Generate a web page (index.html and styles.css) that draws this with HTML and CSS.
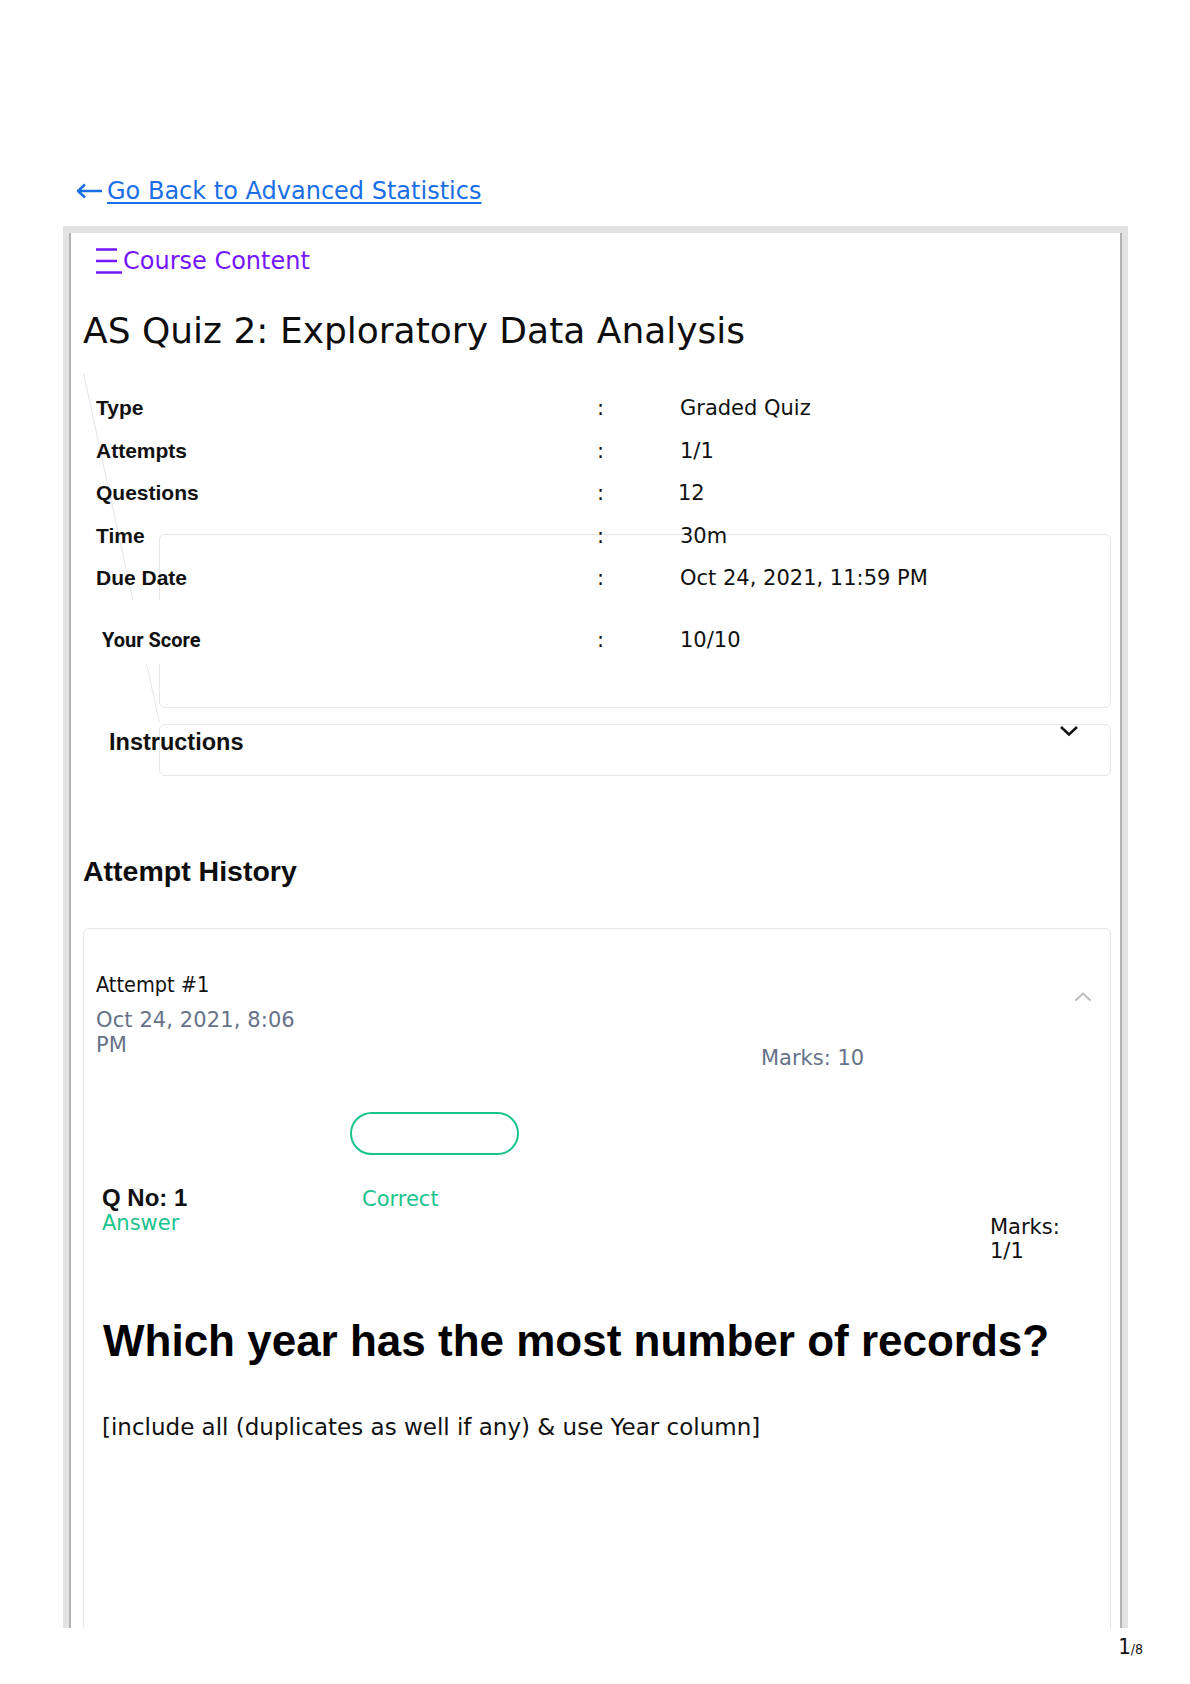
FILE: index.html
```html
<!DOCTYPE html>
<html lang="en">
<head>
  <meta charset="UTF-8" />
  <meta name="viewport" content="width=device-width, initial-scale=1" />
  <title>AS Quiz 2: Exploratory Data Analysis</title>
  <link rel="stylesheet" href="styles.css">
</head>
<body>

  <!-- Back link -->
  <a class="back-link" href="#">
    <svg width="28" height="16" viewBox="0 0 28 16"><path d="M3 8 H27 M10 1.5 L3 8 L10 14.5" fill="none" stroke="currentColor" stroke-width="2.5" stroke-linejoin="round"/></svg>
    <span>Go Back to Advanced Statistics</span>
  </a>

  <!-- Quiz frame -->
  <div class="frame">
    <a class="course-link" href="#">
      <svg width="27" height="30" viewBox="0 0 27 30"><path d="M0 3.5 H21 M0 15 H21 M0 26.5 H26" stroke="currentColor" stroke-width="2.5"/></svg>
      <span>Course Content</span>
    </a>

    <h1 class="quiz-title">AS Quiz 2: Exploratory Data Analysis</h1>

    <div class="summary">
      <div class="info">
        <div class="info-row"><span class="info-label">Type</span><span>:</span><span>Graded Quiz</span></div>
        <div class="info-row"><span class="info-label">Attempts</span><span>:</span><span>1/1</span></div>
        <div class="info-row"><span class="info-label">Questions</span><span>:</span><span class="nudge">12</span></div>
        <div class="info-row"><span class="info-label">Time</span><span>:</span><span>30m</span></div>
        <div class="info-row"><span class="info-label">Due Date</span><span>:</span><span>Oct 24, 2021, 11:59 PM</span></div>
        <div class="info-row score-row"><span class="info-label">Your Score</span><span>:</span><span>10/10</span></div>
      </div>

      <div class="score-box"></div>

      <div class="instructions">
        <span class="instructions-title">Instructions</span>
        <svg width="20" height="12" viewBox="0 0 20 12"><path d="M2 2 L10 9.5 L18 2" fill="none" stroke="#111" stroke-width="2.5"/></svg>
      </div>
    </div>

    <h2 class="history-title">Attempt History</h2>

    <div class="attempt-card">
      <div class="attempt-head">
        <div class="attempt-info">
          <div class="attempt-name">Attempt #1</div>
          <div class="attempt-date">Oct 24, 2021, 8:06 PM</div>
        </div>
        <div class="attempt-marks">Marks: 10</div>
        <svg class="toggle" width="18" height="11" viewBox="0 0 18 11"><path d="M1.5 9.5 L9 2.5 L16.5 9.5" fill="none" stroke="#bdbdbd" stroke-width="2"/></svg>
      </div>

      <div class="status-row">
        <div class="status-pill"></div>
      </div>

      <div class="q-row">
        <div>
          <div class="q-no">Q No: 1</div>
          <div class="q-answer">Answer</div>
        </div>
        <div class="q-result">Correct</div>
        <div class="q-marks">Marks: 1/1</div>
      </div>

      <h3 class="question">Which year has the most number of records?</h3>
      <p class="question-note">[include all (duplicates as well if any) &amp; use Year column]</p>
    </div>
  </div>

  <div class="page-num"><span class="page-cur">1</span>/8</div>

</body>
</html>
```

FILE: styles.css
```css
* {
  box-sizing: border-box;
}

body {
  margin: 0;
  font-family: 'DejaVu Sans', sans-serif;
  background-color: #fff;
  color: #111;
}

/* Back link */
.back-link {
  display: inline-flex;
  align-items: center;
  gap: 4px;
  margin: 176px 0 0 75px;
  font-size: 24px;
  line-height: 30px;
  color: #1a6fe6;
  text-decoration: none;
}

.back-link span {
  text-decoration: underline;
  text-decoration-thickness: 1.5px;
  text-underline-offset: 3px;
}

/* Grey print frame, cut at the page edge */
.frame {
  margin: 20px 0 0 63px;
  width: 1065px;
  height: 1402px;
  overflow: hidden;
  border-style: solid;
  border-color: #e2e2e2;
  border-width: 7px 6px 0 6px;
  box-shadow: inset 2px 0 0 #b2b2b2, inset -2px 0 0 #b2b2b2;
  padding: 0 11px 0 14px;
}

.course-link {
  display: inline-flex;
  align-items: center;
  margin: 13px 0 0 13px;
  font-size: 24px;
  line-height: 30px;
  color: #7417ff;
  text-decoration: none;
}

.quiz-title {
  margin: 29px 0 0;
  font-size: 36px;
  line-height: 44px;
  font-weight: normal;
  color: #0d0d0d;
}

/* Quiz summary */
.summary {
  position: relative;
  padding-top: 34px;
}

.summary::before {
  content: "";
  position: absolute;
  left: 0;
  top: 20px;
  width: 1px;
  height: 358px;
  background-color: #e1e4e9;
  transform-origin: top left;
  transform: rotate(-12.25deg);
}

.info {
  position: relative;
  z-index: 1;
  margin-right: 40px;
}

.info-row {
  display: grid;
  grid-template-columns: 501px 83px 1fr;
  padding-left: 13px;
  font-size: 21px;
  line-height: 42.5px;
  color: #111;
}

.info-label {
  font-family: 'Liberation Sans', Arial, sans-serif;
  font-weight: bold;
}

.nudge {
  margin-left: -2px;
}

.score-row {
  background-color: #fff;
  padding: 19px 0 3px 13px;
}

.score-row .info-label {
  font-family: Roboto, sans-serif;
  font-size: 20px;
  padding-left: 6px;
}

.score-box {
  margin: -130.5px 0 0 76px;
  height: 174px;
  border: 1px solid #e4e7ec;
  border-radius: 6px;
}

.instructions {
  display: flex;
  justify-content: space-between;
  align-items: flex-start;
  margin: 16px 0 0 76px;
  height: 52px;
  padding: 3px 31px 0 0;
  border: 1px solid #e4e7ec;
  border-radius: 6px;
}

.instructions-title {
  margin-left: -51px;
  font-family: 'Liberation Sans', Arial, sans-serif;
  font-weight: bold;
  font-size: 23.5px;
  line-height: 28px;
}

.instructions svg {
  margin-top: -3px;
}

.history-title {
  margin: 78px 0 0;
  font-family: 'Liberation Sans', Arial, sans-serif;
  font-size: 28.5px;
  line-height: 34px;
  color: #0d0d0d;
}

/* Attempt card */
.attempt-card {
  margin-top: 40px;
  min-height: 900px;
  border: 1px solid #e4e7ec;
  border-radius: 6px;
  padding: 42px 13px 0 12px;
}

.attempt-head {
  display: grid;
  grid-template-columns: 665px 1fr auto;
  align-items: start;
}

.attempt-name {
  font-family: 'DejaVu Sans Condensed', 'DejaVu Sans', sans-serif;
  font-stretch: condensed;
  font-size: 21.5px;
  line-height: 28px;
  color: #111;
}

.attempt-date {
  margin-top: 9px;
  width: 215px;
  font-size: 21px;
  line-height: 25px;
  letter-spacing: 0.1px;
  color: #66728a;
}

.attempt-marks {
  margin-top: 75px;
  font-size: 21px;
  line-height: 25px;
  color: #66728a;
}

.toggle {
  margin: 20px 5px 0 0;
}

.status-row {
  margin-top: 41px;
  padding-left: 254px;
}

.status-pill {
  width: 169px;
  height: 43px;
  border: 2px solid #19c48d;
  border-radius: 22px;
}

.q-row {
  display: grid;
  grid-template-columns: 248px 1fr 80px;
  margin-top: 30px;
  padding: 0 27px 0 6px;
}

.q-no {
  font-family: 'Liberation Sans', Arial, sans-serif;
  font-weight: bold;
  font-size: 24px;
  line-height: 26px;
}

.q-answer,
.q-result {
  font-size: 21px;
  line-height: 24px;
  color: #19c48d;
}

.q-result {
  padding: 2px 0 0 12px;
}

.q-marks {
  padding-top: 30px;
  font-size: 21px;
  line-height: 24px;
}

.question {
  margin: 52px 0 0;
  padding-left: 7px;
  font-family: 'Liberation Sans', Arial, sans-serif;
  font-size: 44px;
  line-height: 52px;
  color: #000;
}

.question-note {
  margin: 46px 0 0;
  padding-left: 6px;
  font-size: 23px;
  line-height: 28px;
}

/* Page counter */
.page-num {
  margin-top: 5px;
  padding-right: 47px;
  text-align: right;
  font-family: 'DejaVu Sans Condensed', 'DejaVu Sans', sans-serif;
  font-stretch: condensed;
  font-size: 14px;
  line-height: 28px;
}

.page-cur {
  font-size: 22px;
}
```
